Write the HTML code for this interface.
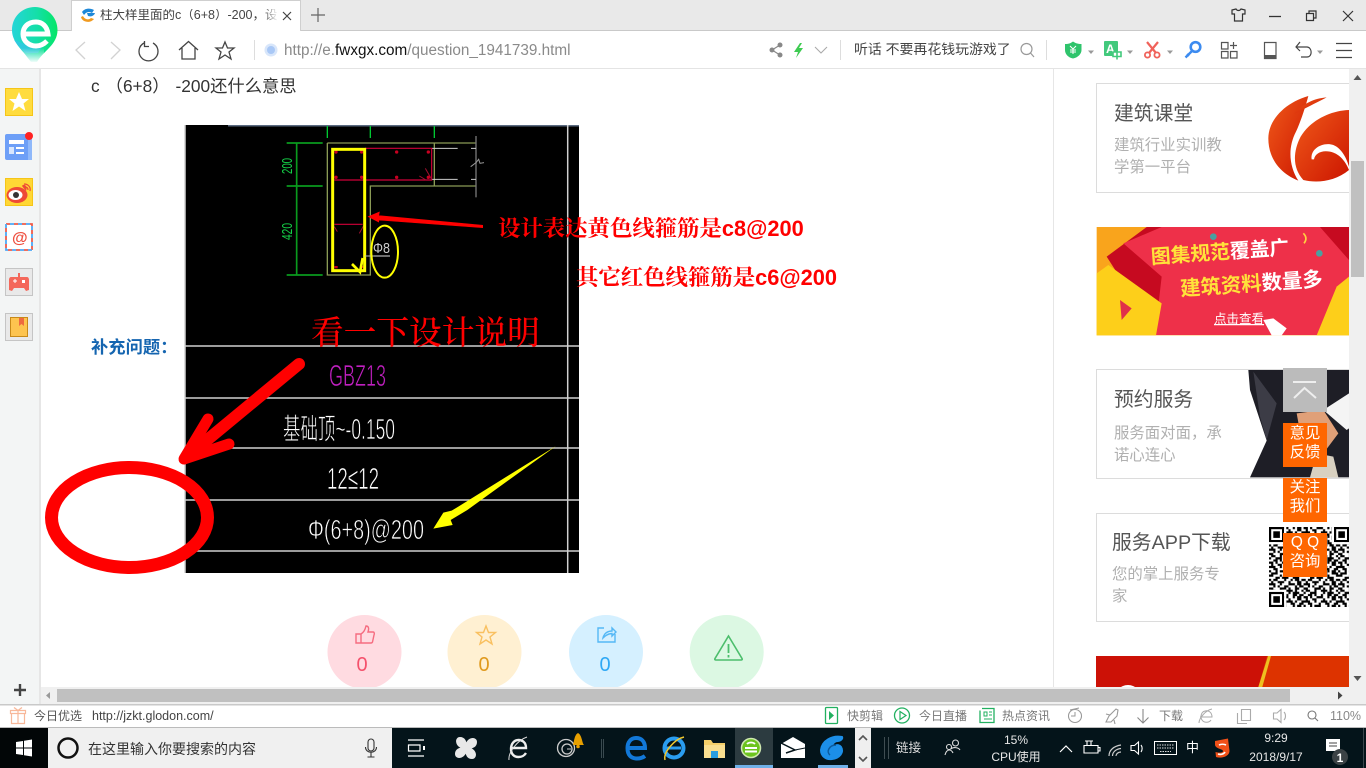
<!DOCTYPE html>
<html lang="zh"><head><meta charset="utf-8"><title>柱大样里面的c（6+8）-200</title>
<style>
html,body{margin:0;padding:0;width:1366px;height:768px;overflow:hidden;background:#fff}
body{position:relative;font-family:"Liberation Sans","Noto Sans CJK SC",sans-serif;text-spacing-trim:space-all}
.b{position:absolute}
.t{position:absolute;white-space:nowrap;line-height:1}
svg{position:absolute;left:0;top:0}
.cad{stroke:#000;stroke-width:.7px}
</style></head><body>
<!-- chrome -->
<div class="b" style="left:0;top:0;width:1366px;height:30px;background:#e9e9e9"></div>
<div class="b" style="left:0;top:30px;width:1366px;height:1px;background:#c9c9c9"></div>
<div class="b" style="left:71px;top:0;width:230px;height:31px;background:#fff;box-sizing:border-box;border:1px solid #cfcfcf;border-bottom:none"></div>
<div class="b" style="left:0;top:68px;width:1366px;height:1px;background:#e4e4e4"></div>
<!-- sidebar -->
<div class="b" style="left:0;top:69px;width:39px;height:635px;background:#f3f5f5"></div>
<div class="b" style="left:39px;top:69px;width:2px;height:635px;background:#e6e6e6"></div>
<div class="b" style="left:1053px;top:69px;width:1px;height:619px;background:#e6e6e6"></div>
<!-- cards -->
<div class="b" style="left:1096px;top:83px;width:254px;height:110px;box-sizing:border-box;border:1px solid #dcdcdc;border-right:none"></div>
<div class="b" style="left:1096px;top:369px;width:254px;height:110px;box-sizing:border-box;border:1px solid #dcdcdc;border-right:none"></div>
<div class="b" style="left:1096px;top:513px;width:254px;height:109px;box-sizing:border-box;border:1px solid #dcdcdc;border-right:none"></div>

<svg width="1366" height="768" viewBox="0 0 1366 768" xmlns="http://www.w3.org/2000/svg">
<defs>
<linearGradient id="lg" x1="0" y1="0" x2="1" y2="0"><stop offset="0" stop-color="#25d5d8"/><stop offset=".55" stop-color="#14dfa8"/><stop offset="1" stop-color="#05e666"/></linearGradient>
<linearGradient id="lt" x1="0" y1="0" x2="0" y2="1"><stop offset="0" stop-color="#fff" stop-opacity="0"/><stop offset="1" stop-color="#fff"/></linearGradient>
<linearGradient id="lr" x1="0" y1="0" x2="1" y2="1"><stop offset="0" stop-color="#f05a1a"/><stop offset="1" stop-color="#cc1500"/></linearGradient>
<pattern id="qr" x="1269" y="527" width="34.56" height="34.56" patternUnits="userSpaceOnUse">
<rect width="34.56" height="34.56" fill="#fff"/>
<path transform="scale(2.16)" stroke="#000" stroke-width="1" fill="none" d="M0 .5h2m1 0h1m2 0h3m2 0h1m1 0h2M1 1.5h1m2 0h2m3 0h1m3 0h2M0 2.5h3m2 0h1m2 0h3m1 0h1m2 0h1M2 3.5h2m3 0h1m2 0h2m2 0h2M0 4.5h1m2 0h1m1 0h3m3 0h1m1 0h2M1 5.5h3m3 0h1m1 0h2m2 0h3M0 6.5h2m3 0h1m2 0h1m2 0h1m3 0h1M3 7.5h2m1 0h3m2 0h3M0 8.5h1m1 0h2m3 0h1m2 0h1m1 0h2m1 0h1M1 9.5h1m2 0h3m2 0h1m3 0h2M0 10.5h3m2 0h1m3 0h3m1 0h2M2 11.5h1m1 0h1m2 0h2m3 0h1m1 0h2M0 12.5h2m3 0h3m1 0h1m2 0h2M1 13.5h2m2 0h1m2 0h3m1 0h1m2 0h1M0 14.5h1m2 0h3m3 0h1m1 0h3M2 15.5h2m1 0h1m2 0h1m2 0h2m1 0h2"/>
</pattern>
</defs>

<!-- logo -->
<path d="M35 7C22 7 12 17 12 30C12 40 19 47 24 53L31 62H37C43 51 57.500 45 57.500 30C57.500 17 47 7 35 7z" fill="url(#lg)"/>
<path d="M14 40C19 47 22 50 26 53H38C42 47 44 44 47 41L30 46z" fill="#3dc0f0" opacity=".55"/>
<rect x="20" y="48" width="24" height="15" fill="url(#lt)"/>
<path d="M24 34H48C47 26 42 22 36 22C28 22 23 27 23 34C23 41 29 46 36 46C40 46 44 44 47 41" fill="none" stroke="#fff" stroke-width="5"/>
<!-- tab -->
<path d="M82 12C85 8 90 8 94 10L92 13C89 11 86 12 84 15z" fill="#1e88d8"/><path d="M87 13H95C94 16 91 17 88 16z" fill="#1e88d8"/><path d="M81 17C82 22 90 24 94 19L91 18C89 20 85 20 83 16z" fill="#f09a20"/>
<path d="M283 12L291 20M291 12L283 20" stroke="#444" stroke-width="1.200" fill="none"/>
<path d="M318 8V22M311 15H325" stroke="#666" stroke-width="1.200" fill="none"/>
<!-- window ctrl -->
<path d="M1232 10L1236 9C1237 11 1240 11 1241 9L1245 10V14H1242.500V21H1234.500V14H1232z" fill="none" stroke="#333" stroke-width="1.200"/>
<path d="M1269 16.500H1281" stroke="#333" stroke-width="1.300"/>
<path d="M1306.500 13.500H1313.500V20.500H1306.500zM1309 13.500V11H1316V18H1313.500" fill="none" stroke="#333" stroke-width="1.200"/>
<path d="M1343 11L1353 21M1353 11L1343 21" stroke="#333" stroke-width="1.200"/>
<!-- nav -->
<path d="M85 42L76 50L85 59" fill="none" stroke="#d2d2d2" stroke-width="1.300"/>
<path d="M111 42L120 50L111 59" fill="none" stroke="#d2d2d2" stroke-width="1.300"/>
<path d="M144 43A9.500 9.500 0 1 0 153 43M144.500 41V46.500H149" fill="none" stroke="#444" stroke-width="1.300"/>
<path d="M179 50L188.500 41.500L198 50M182 48V59H195V48" fill="none" stroke="#444" stroke-width="1.300"/>
<path d="M225 42L227.500 48H234L229 52L231 59L225 55L219 59L221 52L216 48H222.500z" fill="none" stroke="#444" stroke-width="1.300"/>
<path d="M254.500 40V60" stroke="#ddd"/>
<circle cx="271" cy="50" r="6.500" fill="#d8e6fa"/><circle cx="271" cy="50" r="4" fill="#a9c8f6"/>
<!-- right toolbar -->
<circle cx="772" cy="50" r="2.500" fill="#888"/><circle cx="780" cy="45" r="2.500" fill="#888"/><circle cx="780" cy="55" r="2.500" fill="#888"/><path d="M772 50L780 45M772 50L780 55" stroke="#888" stroke-width="1.200"/>
<path d="M800 43L794 52H798L796 58L803 48H799L802 43z" fill="#3ecb52"/>
<path d="M815 47L821 53L827 47" fill="none" stroke="#aaa" stroke-width="1.100"/>
<path d="M840.500 40V60M1046.500 40V60" stroke="#ddd"/>
<circle cx="1026.500" cy="49" r="5.500" fill="none" stroke="#999" stroke-width="1.200"/><path d="M1030.500 53L1034 57" stroke="#999" stroke-width="1.200"/>
<path d="M1065 44C1069 44 1071 43 1073 41.500C1075 43 1078 44 1081.500 44V50C1081.500 54 1078 57.500 1073 58.500C1068 57.500 1065 54 1065 50z" fill="#2fc46c"/>
<path d="M1070 46L1073 49L1076 46M1073 49V54M1070 50H1076M1070 52H1076" stroke="#fff" stroke-width="1" fill="none"/>
<path d="M1088 50.500H1094L1091 54z" fill="#999"/>
<rect x="1104" y="41" width="14" height="15" rx="1" fill="#42c97c"/>
<text x="1106" y="53" font-family="Liberation Sans" font-size="12" font-weight="bold" fill="#fff">A</text>
<path d="M1113 52H1121V56.500H1113zM1117 49V59.500" fill="#fff" stroke="#42c97c" stroke-width="1.600"/>
<path d="M1127 50.500H1133L1130 54z" fill="#999"/>
<path d="M1147 42L1156 53M1158 42L1149 53" stroke="#f0625a" stroke-width="2.200"/><circle cx="1147.500" cy="55" r="2.600" fill="none" stroke="#f0625a" stroke-width="1.800"/><circle cx="1157" cy="55" r="2.600" fill="none" stroke="#f0625a" stroke-width="1.800"/>
<path d="M1167 50.500H1173L1170 54z" fill="#999"/>
<circle cx="1195.500" cy="47" r="4.800" fill="none" stroke="#3c8bf0" stroke-width="2.600"/><path d="M1192 51L1185.500 57.500M1187 54L1189 56" stroke="#3c8bf0" stroke-width="2.400"/>
<path d="M1221.500 42.500H1228V49H1221.500zM1221.500 51.500H1228V58H1221.500zM1230.500 51.500H1237V58H1230.500zM1233.500 42V49M1230 45.500H1237" fill="none" stroke="#555" stroke-width="1.200"/>
<path d="M1264.500 42.500H1276V58.500H1264.500z" fill="none" stroke="#555" stroke-width="1.200"/><rect x="1264" y="55" width="12.500" height="3.500" fill="#555"/>
<path d="M1296 47H1307C1312 47 1313 57 1307 57H1301M1300 42L1296 47L1300 51" fill="none" stroke="#444" stroke-width="1.200"/>
<path d="M1317 50.500H1323L1320 54z" fill="#999"/>
<path d="M1336 43.500H1352M1336 50.500H1352M1336 57.500H1352" stroke="#444" stroke-width="1.300"/>

<!-- sidebar icons -->
<rect x="5.500" y="88.500" width="27" height="27" fill="#ffdc3e" stroke="#f5c518"/><path d="M19 92L22 99H29L23.500 103.500L25.500 111L19 106.500L12.500 111L14.500 103.500L9 99H16z" fill="#fff"/>
<rect x="5" y="134" width="27" height="26" rx="2" fill="#6d9ff7"/><rect x="28" y="136" width="4" height="24" fill="#8fb8fa"/><rect x="9" y="140" width="15" height="4" fill="#fff"/><rect x="9" y="147" width="5" height="7" fill="#d8e6fd"/><rect x="16" y="147" width="8" height="2" fill="#fff"/><rect x="16" y="152" width="8" height="2" fill="#fff"/><circle cx="29" cy="136" r="4" fill="#f22"/>
<rect x="5.500" y="178.500" width="27" height="27" fill="#ffd735" stroke="#f5c518"/><ellipse cx="17" cy="195" rx="10.500" ry="8" fill="#ee4a36"/><path d="M22 186C24 183 28 186 26 191" fill="#ee4a36"/><ellipse cx="15.500" cy="195" rx="7" ry="5" fill="#fff"/><circle cx="16" cy="195" r="3" fill="#333"/><path d="M24 184C28 184 31 187 30 191M25 187C27 187 28 188 28 190" fill="none" stroke="#ee4a36" stroke-width="1.200"/>
<rect x="5" y="223" width="28" height="28" fill="#fff"/>
<rect x="6" y="224" width="26" height="26" fill="none" stroke="#ee5a48" stroke-width="1.800" stroke-dasharray="4 4"/>
<rect x="6" y="224" width="26" height="26" fill="none" stroke="#4ba8f5" stroke-width="1.800" stroke-dasharray="4 4" stroke-dashoffset="4"/>
<text x="12" y="243" font-family="Liberation Sans" font-size="16" font-weight="bold" fill="#ee5040">@</text>
<rect x="5.500" y="268.500" width="27" height="27" fill="#e9e9e9" stroke="#c5c5c5"/><path d="M11 277H27C28 277 29 278 29 280V290L26 291L24 288H14L12 291L9 290V280C9 278 10 277 11 277z" fill="#f4675a"/><rect x="18" y="273" width="2" height="4" fill="#f4675a"/><path d="M13 281H17M15 279V283" stroke="#fff" stroke-width="1"/><rect x="22" y="280" width="3" height="3" fill="#fff"/>
<rect x="5.500" y="313.500" width="27" height="27" fill="#e9e9e9" stroke="#c5c5c5"/><rect x="10.500" y="317.500" width="17" height="19" fill="#fdc44f" stroke="#c88a18"/><path d="M19 318H24V326L21.500 324L19 326z" fill="#ee6a40"/>
<path d="M20 684V696M14 690H26" stroke="#444" stroke-width="2.400"/>

<!-- CAD image -->
<rect x="185" y="125" width="394" height="448" fill="#000"/>
<rect x="228" y="125" width="351" height="1.500" fill="#5a6a80"/>
<g fill="none" stroke="#d0d0d0" stroke-width="1.500">
<path d="M185 125V573"/><path d="M567.700 125V573"/>
<path d="M185 346H579M185 398H579M185 448H579M185 500H579M185 551H579"/>
</g>
<g transform="translate(180,120) scale(.33333)" fill="none">
<path d="M442 18V54M571 18V54M763 18V54" stroke="#00c832" stroke-width="4"/>
<path d="M320 69H428M320 198H428M320 465H428M350 69V465" stroke="#0a9a1e" stroke-width="5"/>
<path d="M442 69H888M442 69V465H571V198H888M763 69V198" stroke="#8a9a55" stroke-width="4"/>
<path d="M888 48V232" stroke="#777" stroke-width="4"/>
<path d="M872 140L888 128L896 118L900 130L912 128" stroke="#999" stroke-width="3"/>
<path d="M755 85H833M873 85H888M755 178H833M873 178H888" stroke="#ccc" stroke-width="3"/>
<path d="M555 85H755V180H463M463 313H548" stroke="#d00038" stroke-width="3.500"/>
<path d="M718 168L738 180M736 145L755 178" stroke="#a01030" stroke-width="3"/>
<path d="M463 320L472 335M552 315L538 340" stroke="#a01030" stroke-width="3"/>
<g fill="#c80020" stroke="none"><circle cx="468" cy="96" r="5"/><circle cx="545" cy="96" r="5"/><circle cx="650" cy="96" r="5"/><circle cx="745" cy="96" r="5"/><circle cx="468" cy="172" r="5"/><circle cx="545" cy="172" r="5"/><circle cx="650" cy="172" r="5"/><circle cx="745" cy="172" r="5"/><rect x="463" y="438" width="10" height="7"/><rect x="540" y="438" width="10" height="7"/></g>
<rect x="458" y="88" width="96" height="364" stroke="#ff0" stroke-width="9"/>
<path d="M516 432L540 456L548 414" stroke="#ff0" stroke-width="8"/>
<path d="M555 408H580" stroke="#bbb" stroke-width="3"/>
<ellipse cx="614" cy="395" rx="40" ry="78" stroke="#ff0" stroke-width="6"/>
<path d="M580 408H630" stroke="#ddd" stroke-width="3"/>
<path d="M565 290L598 276L596 287L908 316V323L596 300L596 306z" fill="#f00" stroke="#f00" stroke-width="2"/>
</g>
<text transform="translate(292,174) rotate(-90)" font-family="Liberation Sans" font-size="15" fill="#14d448" textLength="16" lengthAdjust="spacingAndGlyphs">200</text>
<text transform="translate(292,240) rotate(-90)" font-family="Liberation Sans" font-size="15" fill="#14d448" textLength="17" lengthAdjust="spacingAndGlyphs">420</text>
<text x="373" y="253" font-family="Liberation Sans" font-size="15" fill="#ccc" textLength="17" lengthAdjust="spacingAndGlyphs">Φ8</text>

<!-- CAD labels -->
<text class="cad" x="329" y="386" font-family="Liberation Sans" font-size="31" fill="#c020c0" textLength="57" lengthAdjust="spacingAndGlyphs">GBZ13</text>
<text class="cad" x="283" y="439" font-family="Liberation Sans,Noto Sans CJK SC,sans-serif" font-size="29" fill="#fff" textLength="112" lengthAdjust="spacingAndGlyphs">基础顶~-0.150</text>
<text class="cad" x="327" y="489" font-family="Liberation Sans,Noto Sans CJK SC,sans-serif" font-size="31" fill="#fff" textLength="52" lengthAdjust="spacingAndGlyphs">12≤12</text>
<text class="cad" x="308" y="539" font-family="Liberation Sans,DejaVu Sans,sans-serif" font-size="28" fill="#fff" textLength="116" lengthAdjust="spacingAndGlyphs">Φ(6+8)@200</text>
<!-- yellow arrow -->
<g transform="translate(180,340) scale(.33333)"><path d="M1128 318L838 498L815 512L790 518L760 566L818 555L812 540L862 510z" fill="#ff0"/></g>
<!-- red arrow & circle -->
<path d="M299 364L195 450" stroke="#f00" stroke-width="12" stroke-linecap="round"/>
<path d="M208 419L184 459L229 444" fill="none" stroke="#f00" stroke-width="11" stroke-linecap="round" stroke-linejoin="round"/>
<ellipse cx="129.500" cy="517.500" rx="78" ry="50" fill="none" stroke="#f00" stroke-width="13"/>

<!-- action circles -->
<g>
<circle cx="364.500" cy="652" r="37" fill="#ffdbe1"/><circle cx="484.500" cy="652" r="37" fill="#fff0d2"/><circle cx="606" cy="652" r="37" fill="#d5f0ff"/><circle cx="726.700" cy="652" r="37" fill="#dcf8e3"/>
<path d="M356 634H361V643H356zM361 634C364 632 365 630 366 626C369 626 369 629 368 632H373C374.500 632 374.500 634 374 635L372.500 642C372 643 371.500 643 371 643H361" fill="none" stroke="#f56c80" stroke-width="1.400"/>
<path d="M486 626L488.500 632.500H495.500L490 637L492 644L486 640L480 644L482 637L476.500 632.500H483.500z" fill="none" stroke="#f9c060" stroke-width="1.400"/>
<path d="M604 628H598V642H615V634M603 638C604 633 608 631 612 631V628L616 632L612 636V633.500C609 633.500 606 635 603 638z" fill="none" stroke="#55b8f5" stroke-width="1.400"/>
<path d="M728.500 636L742 658.500C742.500 659.500 742 660 741 660H716C715 660 714.500 659.500 715 658.500z" fill="none" stroke="#4cbe6c" stroke-width="1.600"/><path d="M728.500 644V653M728.500 655V657.500" stroke="#4cbe6c" stroke-width="1.800"/>
</g>

<!-- banner -->
<g transform="translate(1090,70) scale(.33333)">
<rect x="20" y="471" width="757" height="325" fill="#f9a41c"/>
<path d="M50 560L170 471H777V640L660 795H200z" fill="#c60a20"/>
<path d="M100 520L215 471H690L777 570V795H195L215 620z" fill="#ee3049"/>
<path d="M20 610L55 585L215 700L198 796H20z" fill="#fdcf1a"/>
<path d="M680 796L740 650L777 620V796z" fill="#fdcf1a"/>
<path d="M90 690L125 715L95 750z" fill="#e0304a"/>
<path d="M130 471H170L125 490z" fill="#f9a41c"/>
<circle cx="370" cy="500" r="10" fill="#4aa0a0"/><circle cx="688" cy="550" r="10" fill="#4aa0a0"/>
<path d="M640 490C650 500 650 510 642 520" stroke="#ffd040" stroke-width="5" fill="none"/>
<path d="M520 750L550 745L590 775L575 796H545z" fill="#fff"/>
</g>
<g transform="rotate(-4 1220 270)">
<text x="1152" y="259" font-family="Noto Sans CJK SC,sans-serif" font-size="19.800" font-weight="700" fill="#ffe23a">图集规范<tspan fill="#fff">覆盖广</tspan></text>
<text x="1179" y="293" font-family="Noto Sans CJK SC,sans-serif" font-size="20.400" font-weight="700" fill="#ffe23a">建筑资料<tspan fill="#fff">数量多</tspan></text>
</g>
<text x="1214" y="323" font-family="Noto Sans CJK SC,sans-serif" font-size="12.500" fill="#fff" text-decoration="underline">点击查看</text>

<!-- card 1 logo -->
<g transform="translate(1090,70) scale(.33333)" fill="url(#lr)">
<path d="M655 78C585 98 535 150 535 205C535 265 570 310 625 332C598 290 592 235 618 185C632 155 645 115 655 78z"/>
<path d="M710 82C672 85 640 100 612 132C645 115 675 100 710 82z"/>
<path d="M777 120C720 122 660 152 632 200C606 250 610 298 640 330C680 340 735 335 777 300z"/>
<path d="M665 268C660 235 700 215 730 225C755 235 770 265 777 290V300C765 270 745 250 720 245C695 240 675 250 672 268z" fill="#fff"/>
</g>

<!-- card 3 image -->
<g transform="translate(1090,350) scale(.33333)">
<path d="M475 60H777V382H480L530 272L480 120z" fill="#1e1e26"/>
<path d="M490 65L560 160L530 270L510 200z" fill="#3c3c46"/>
<path d="M620 190L700 180L745 250L700 310L640 300z" fill="#e0a078"/>
<path d="M777 130L700 180L770 240L777 235z" fill="#f4f4f4"/>
<path d="M660 382L680 310L730 320L745 382z" fill="#d8d0c0"/>
</g>
<!-- QR -->
<g>
<rect x="1269" y="527" width="80" height="80" fill="url(#qr)"/>
<path d="M1269 527h15.100v15.100h-15.100z" fill="#000"/>
<rect x="1271.200" y="529.200" width="10.800" height="10.800" fill="#fff"/>
<rect x="1273.300" y="531.300" width="6.600" height="6.600" fill="#000"/>
<rect x="1284.100" y="527" width="2.200" height="17" fill="#fff"/><rect x="1269" y="542.100" width="17" height="2.200" fill="#fff"/>
<path d="M1269 591.900h15.100v15.100h-15.100z" fill="#000"/>
<rect x="1271.200" y="594.100" width="10.800" height="10.800" fill="#fff"/>
<rect x="1273.300" y="596.200" width="6.600" height="6.600" fill="#000"/>
<rect x="1269" y="589.700" width="17" height="2.200" fill="#fff"/><rect x="1284.100" y="589.700" width="2.200" height="17.300" fill="#fff"/>
<path d="M1334 527h15v15.100h-15z" fill="#000"/>
<rect x="1336.200" y="529.200" width="10.800" height="10.800" fill="#fff"/>
<rect x="1338.300" y="531.300" width="6.600" height="6.600" fill="#000"/>
<rect x="1331.800" y="527" width="2.200" height="17" fill="#fff"/><rect x="1331.800" y="542.100" width="17.200" height="2.200" fill="#fff"/>
</g>

<!-- bottom banner -->
<rect x="1096" y="656" width="171" height="32" fill="#cc1106"/>
<path d="M1267 656H1349V688H1258z" fill="#dd3300"/>
<path d="M1268 656H1271L1262 688H1258z" fill="#eec020"/>
<ellipse cx="1128" cy="699" rx="14" ry="14" fill="#fff"/>

<!-- floats -->
<rect x="1283" y="368" width="44" height="44" fill="#bbb"/>
<path d="M1293 382H1316M1294 398L1304.500 388L1316 398" fill="none" stroke="#eee" stroke-width="2"/>
<rect x="1283" y="423" width="44" height="44" fill="#ff6600"/>
<rect x="1283" y="478" width="44" height="44" fill="#ff6600"/>
<rect x="1283" y="533" width="44" height="44" fill="#ff6600"/>

<!-- scrollbars -->
<rect x="1349" y="69" width="17" height="619" fill="#f0f0f0"/>
<rect x="1351" y="161" width="13" height="116" fill="#c0c0c0"/>
<path d="M1353.500 80L1357.500 75L1361.500 80z" fill="#555"/><path d="M1353.500 676L1357.500 681L1361.500 676z" fill="#555"/>
<rect x="41" y="687" width="1325" height="17" fill="#f0f0f0"/>
<rect x="57" y="689" width="1233" height="13" fill="#c0c0c0"/>
<path d="M50 692V699L46 695.500z" fill="#999"/><path d="M1338 691.500V699.500L1342.500 695.500z" fill="#444"/>
<rect x="0" y="704" width="1366" height="1.500" fill="#c9c9c9"/>
<rect x="0" y="705.500" width="1366" height="22" fill="#fff"/>
<rect x="0" y="727" width="1366" height="1" fill="#bbb"/>

<!-- status bar -->
<path d="M11.500 713.500H24.500V723.500H11.500zM10.500 710.500H25.500V713.500H10.500zM18 710.500V723.500M14 707.500L18 710.500L22 707.500" fill="none" stroke="#f8b89a" stroke-width="1.200"/>
<rect x="825.500" y="707.500" width="12" height="16" rx="1" fill="none" stroke="#22b060" stroke-width="1.300"/><path d="M829 711L834 715.500L829 720z" fill="#22b060"/>
<circle cx="902" cy="715.500" r="7.500" fill="none" stroke="#22b060" stroke-width="1.300"/><path d="M900 711.500L906 715.500L900 719.500z" fill="none" stroke="#22b060" stroke-width="1.200"/>
<path d="M982 708.500H994V722.500H980V710.500" fill="none" stroke="#22b060" stroke-width="1.300"/><path d="M984 712H987V716H984zM989 712H992M989 715H992M984 719H992" fill="none" stroke="#22b060"/>
<circle cx="1075" cy="716" r="6.500" fill="none" stroke="#999" stroke-width="1.100"/><path d="M1075 712V716H1071M1070 710L1079 708" fill="none" stroke="#999"/>
<path d="M1106 722L1109 716L1116 709L1118 710L1117 716L1111 722zM1106 714L1110 715M1114 720L1115 724" fill="none" stroke="#999" stroke-width="1.100"/>
<path d="M1143 709V723M1137.500 717.500L1143 723L1148.500 717.500" fill="none" stroke="#888" stroke-width="1.100"/>
<path d="M1200 717H1212C1212 712 1208 710 1205 711C1201 712 1200 717 1202 720C1204 723 1209 723 1211 720M1199 723C1199 718 1206 710 1212 709" fill="none" stroke="#aaa"/>
<path d="M1241.500 709.500H1250.500V720.500H1241.500zM1237.500 713V723.500H1247" fill="none" stroke="#aaa" stroke-width="1.100"/>
<path d="M1273.500 713H1277L1281 709.500V722.500L1277 719H1273.500zM1284 712C1286 714 1286 718 1284 720" fill="none" stroke="#aaa" stroke-width="1.100"/>
<circle cx="1312" cy="715" r="4" fill="none" stroke="#777" stroke-width="1.100"/><path d="M1315 718L1318 721" stroke="#777" stroke-width="1.100"/>

<!-- taskbar -->
<rect x="0" y="728" width="1366" height="40" fill="#04141a"/>
<rect x="0" y="728" width="48" height="40" fill="#020607"/>
<rect x="48" y="728" width="344" height="40" fill="#f0f0f0"/>
<path d="M16 742L23 741V747.500H16zM24 740.800L32 739.500V747.500H24zM16 748.500H23V755L16 754zM24 748.500H32V756.500L24 755.200z" fill="#fff"/>
<circle cx="68" cy="748" r="9.500" fill="none" stroke="#111" stroke-width="2.500"/>
<rect x="368" y="739" width="6" height="12" rx="3" fill="none" stroke="#333" stroke-width="1.100"/><path d="M365.500 747C365.500 754 376.500 754 376.500 747M371 752V757M367.500 757H374.500" fill="none" stroke="#333" stroke-width="1.100"/>
<path d="M408 740H424M408 756H424M408.500 745H420V751H408.500z" fill="none" stroke="#fff" stroke-width="1.200"/><rect x="423" y="746" width="2" height="4" fill="#fff"/>
<path d="M466 748C456 748 455 738 460 738C465 738 466 743 466 748C466 738 476 737 476 742C476 747 471 748 466 748C476 748 477 758 472 758C467 758 466 753 466 748C466 758 456 759 456 754C456 749 461 748 466 748z" fill="#e8e8e8" stroke="#e8e8e8" stroke-width="2"/>
<path d="M511 748H526C526 742 522 740 518.500 740C514 740 511 744 511 749C511 754 514 757 518.500 757C522 757 524 756 526 753" fill="none" stroke="#eee" stroke-width="2.400"/><path d="M509 760C508 752 518 740 527 737" fill="none" stroke="#ddd" stroke-width="1"/>
<circle cx="566" cy="748" r="8.500" fill="none" stroke="#ccc" stroke-width="1.300"/><circle cx="567" cy="749" r="5" fill="none" stroke="#ccc" stroke-width="1.300"/><path d="M567 749H571" stroke="#ccc"/>
<path d="M573 745C574 743 574 735 578 733C582 735 582 743 584 745z" fill="#e8a000"/><circle cx="578" cy="746.500" r="1.800" fill="#e8a000"/>
<path d="M601.500 739V758M603.500 739V758" stroke="#3a4a50"/>
<path d="M629 748H645C645 741 641 738 636 738C631 738 627.500 742 627.500 748C627.500 755 631 758.500 637 758.500C640 758.500 643 757.500 645 756" fill="none" stroke="#1278d8" stroke-width="4"/>
<circle cx="674" cy="748" r="9.500" fill="none" stroke="#2a9df0" stroke-width="4"/><path d="M666 748H681" stroke="#2a9df0" stroke-width="3"/><path d="M665 760C663 752 675 739 684 737" fill="none" stroke="#f0c830" stroke-width="1.500"/>
<path d="M704 740H711L713 743H725V758H704z" fill="#f5cf6a"/><rect x="704" y="745" width="21" height="13" fill="#fadf90"/><rect x="711" y="751" width="7" height="7" fill="#2a9de0"/>
<rect x="735" y="728" width="38" height="40" fill="#2c3b40"/><rect x="735" y="765" width="38" height="3" fill="#6fb0e8"/>
<circle cx="751" cy="748" r="9.500" fill="#6cc41e" stroke="#cfe8b0" stroke-width="1.500"/><path d="M745 748H757M745 751.500H757" stroke="#fff" stroke-width="2"/><path d="M747 744C749 742 753 742 755 744" stroke="#fff" stroke-width="1.800" fill="none"/>
<path d="M781 744L793 737L805 744V758H781z" fill="#fff"/><path d="M781 743L795 750L786 753" fill="none" stroke="#04141a" stroke-width="1.500"/><path d="M805 748L795 750" stroke="#04141a"/>
<path d="M842 737C832 735 822 741 821 750C821 756 826 760 832 759C840 758 844 752 841 747C838 743 832 746 833 750C830 747 833 741 838 741C840 741 843 739 842 737z" fill="#1c8fe8" stroke="#1c8fe8" stroke-width="2"/>
<path d="M836 745C829 745 826 752 830 755" fill="none" stroke="#0c5a9c" stroke-width="1.500"/>
<rect x="818" y="765" width="30" height="3" fill="#6fb0e8"/>
<rect x="855" y="728" width="16" height="40" fill="#efefef"/>
<path d="M859 740L863 736L867 740M859 757L863 761L867 757" fill="none" stroke="#555" stroke-width="1.600"/>
<path d="M884.500 737V759M888.500 737V759" stroke="#3f4d52"/>
<circle cx="955.500" cy="743" r="3" fill="none" stroke="#ddd" stroke-width="1.100"/><circle cx="949" cy="747" r="2.500" fill="none" stroke="#ddd" stroke-width="1.100"/><path d="M945 755C946 751 948 750 949.500 750C951 750 952 751 953 753M951 749C953 747 958 747 960 750" fill="none" stroke="#ddd" stroke-width="1.100"/>
<path d="M1060 752L1066 746L1072 752" fill="none" stroke="#fff" stroke-width="1.200"/>
<path d="M1084 745.500H1098V753H1084zM1098 747.500H1100V751H1098zM1087 741V746M1091 741V746M1085 741H1093" fill="none" stroke="#fff" stroke-width="1.100"/>
<path d="M1109 756C1109 750 1114 746 1121 745M1112.500 756C1112.500 752 1116 749 1121 748.500M1116 756C1116 754 1118 752 1121 752" fill="none" stroke="#ccc" stroke-width="1.200"/>
<path d="M1131 745.500H1134.500L1138.500 742V754L1134.500 750.500H1131zM1141 745C1142.500 747 1142.500 750 1141 752" fill="none" stroke="#fff" stroke-width="1.100"/>
<rect x="1154.500" y="741.500" width="22" height="13" fill="none" stroke="#fff"/><path d="M1157 745H1174M1157 748H1174M1160 751.500H1171" stroke="#ddd" stroke-dasharray="1.500 1"/>
<path d="M1215 741L1228 738.500L1229.500 751C1229.500 756 1222 759 1216 757L1215.500 752C1219 753 1223 753 1223 751C1223 749 1216 749 1215 745z" fill="#f05018"/><path d="M1219 745C1221 744 1224 744 1226 745M1218 754C1221 755 1224 754 1225 752" stroke="#fff" stroke-width="1.600" fill="none"/>
<path d="M1326 739H1340V751H1326z" fill="#fff"/><path d="M1329 743H1337M1329 746H1337" stroke="#444"/>
<circle cx="1340" cy="757" r="8" fill="#3c4346"/>
<text x="1340" y="762" font-family="Liberation Sans" font-size="12" font-weight="bold" fill="#fff" text-anchor="middle">1</text>
<rect x="1363" y="728" width="1" height="40" fill="#3a474c"/>
</svg>

<!-- texts -->
<div class="t" style="left:100px;top:9px;font-size:12.500px;color:#444;width:177px;overflow:hidden">柱大样里面的c（6+8）-200，设</div>
<div class="b" style="left:263px;top:5px;width:15px;height:22px;background:linear-gradient(to right,rgba(255,255,255,0),#fff)"></div>
<div class="t" style="left:284px;top:43px;font-size:15.300px;color:#8a8a8a">http://e.<span style="color:#111">fwxgx.com</span>/question_1941739.html</div>
<div class="t" style="left:854px;top:43px;font-size:13.900px;color:#444;">听话 不要再花钱玩游戏了</div>
<div class="t" style="left:91px;top:78px;font-size:17.300px;color:#333;">c<span style="margin-left:6px">（</span>6+8）<span style="margin-left:6px">-200</span>还什么意思</div>
<div class="t" style="left:91px;top:339px;font-size:17.300px;font-weight:700;color:#1565b0">补充问题：</div>

<div class="t" style="left:498px;top:216px;font-family:'Noto Serif CJK SC',serif;font-size:22.400px;font-weight:700;color:#f00">设计表达黄色线箍筋是<span style="font-family:'Liberation Sans',sans-serif;font-size:21.800px">c8@200</span></div>
<div class="t" style="left:576px;top:265px;font-family:'Noto Serif CJK SC',serif;font-size:22.400px;font-weight:700;color:#f00">其它红色线箍筋是<span style="font-family:'Liberation Sans',sans-serif;font-size:21.800px">c6@200</span></div>
<div class="t" style="left:311px;top:315px;font-family:'Noto Serif CJK SC',serif;font-size:32.700px;font-weight:500;color:#f00">看一下设计说明</div>

<div class="t" style="left:1114px;top:105px;font-size:19.800px;color:#555">建筑课堂</div>
<div class="t" style="left:1114px;top:138px;font-size:15.400px;color:#b0b0b0">建筑行业实训教</div>
<div class="t" style="left:1114px;top:160px;font-size:15.400px;color:#b0b0b0">学第一平台</div>
<div class="t" style="left:1114px;top:391px;font-size:19.800px;color:#555">预约服务</div>
<div class="t" style="left:1114px;top:426px;font-size:15.400px;color:#b0b0b0">服务面对面，承</div>
<div class="t" style="left:1114px;top:448px;font-size:15.400px;color:#b0b0b0">诺心连心</div>
<div class="t" style="left:1112px;top:534px;font-size:19.800px;color:#555">服务APP下载</div>
<div class="t" style="left:1112px;top:567px;font-size:15.400px;color:#b0b0b0">您的掌上服务专</div>
<div class="t" style="left:1112px;top:589px;font-size:15.400px;color:#b0b0b0">家</div>

<div class="t" style="left:1283px;top:424px;width:44px;text-align:center;font-size:15.400px;line-height:19px;color:#fff;white-space:normal">意见<br>反馈</div>
<div class="t" style="left:1283px;top:478px;width:44px;text-align:center;font-size:15.400px;line-height:19px;color:#fff;white-space:normal">关注<br>我们</div>
<div class="t" style="left:1283px;top:533px;width:44px;text-align:center;font-size:15.400px;line-height:19px;color:#fff;white-space:normal">Q Q<br>咨询</div>

<div class="t" style="left:351px;top:655px;width:22px;text-align:center;font-size:20px;color:#f5516c">0</div>
<div class="t" style="left:473px;top:655px;width:22px;text-align:center;font-size:20px;color:#e09a1e">0</div>
<div class="t" style="left:594px;top:655px;width:22px;text-align:center;font-size:20px;color:#2ea8f5">0</div>

<div class="t" style="left:34px;top:710px;font-size:12px;color:#555">今日优选</div>
<div class="t" style="left:92px;top:710px;font-size:12.500px;color:#444">http://jzkt.glodon.com/</div>
<div class="t" style="left:847px;top:710px;font-size:12px;color:#777">快剪辑</div>
<div class="t" style="left:919px;top:710px;font-size:12px;color:#777">今日直播</div>
<div class="t" style="left:1002px;top:710px;font-size:12px;color:#777">热点资讯</div>
<div class="t" style="left:1159px;top:710px;font-size:12px;color:#777">下载</div>
<div class="t" style="left:1330px;top:710px;font-size:12.500px;color:#888">110%</div>

<div class="t" style="left:88px;top:742px;font-size:14px;color:#333">在这里输入你要搜索的内容</div>
<div class="t" style="left:896px;top:742px;font-size:12.500px;color:#ddd">链接</div>
<div class="t" style="left:976px;top:734px;width:80px;text-align:center;font-size:12px;color:#e8e8e8">15%</div>
<div class="t" style="left:976px;top:751px;width:80px;text-align:center;font-size:12px;color:#e8e8e8">CPU使用</div>
<div class="t" style="left:1186px;top:741px;font-size:13px;color:#fff">中</div>
<div class="t" style="left:1236px;top:732px;width:80px;text-align:center;font-size:12px;color:#e8e8e8">9:29</div>
<div class="t" style="left:1236px;top:751px;width:80px;text-align:center;font-size:12px;color:#e8e8e8">2018/9/17</div>
</body></html>
